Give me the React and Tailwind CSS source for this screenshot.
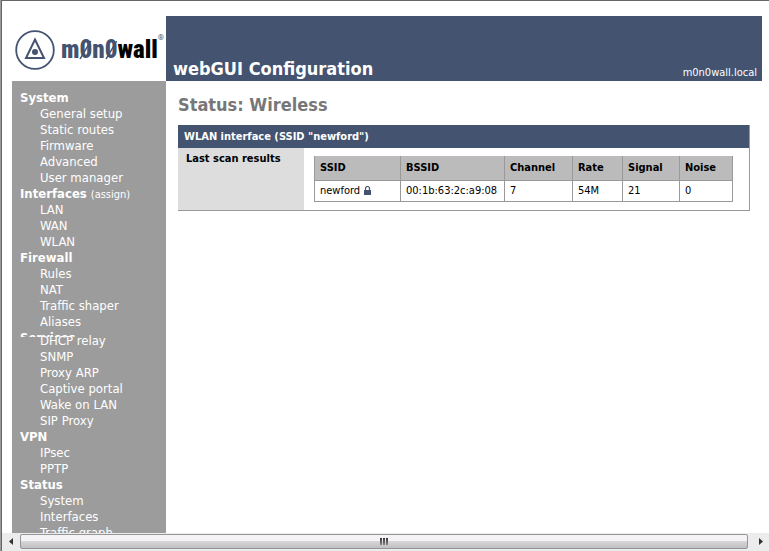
import React from "react";

const menu = [
  { title: "System", items: ["General setup", "Static routes", "Firmware", "Advanced", "User manager"] },
  { title: "Interfaces", extra: "(assign)", items: ["LAN", "WAN", "WLAN"] },
  { title: "Firewall", items: ["Rules", "NAT", "Traffic shaper", "Aliases"] },
  {
    title: "Services",
    cut: true,
    items: ["DHCP relay", "SNMP", "Proxy ARP", "Captive portal", "Wake on LAN", "SIP Proxy"],
  },
  { title: "VPN", items: ["IPsec", "PPTP"] },
  { title: "Status", items: ["System", "Interfaces", "Traffic graph"] },
];

const columns = [
  { name: "SSID", width: "w-[86px]" },
  { name: "BSSID", width: "w-[104px]" },
  { name: "Channel", width: "w-[68px]" },
  { name: "Rate", width: "w-[50px]" },
  { name: "Signal", width: "w-[57px]" },
  { name: "Noise", width: "w-[53px]" },
];

const networks = [["newford", "00:1b:63:2c:a9:08", "7", "54M", "21", "0"]];

function SlashedZero() {
  return (
    <span className="relative inline-block">
      0
      <svg
        className="absolute inset-x-0 top-2 h-5 w-full"
        viewBox="0 0 12 20"
        preserveAspectRatio="none"
        aria-hidden="true"
      >
        <path d="M1 19 L11 1" stroke="#435370" strokeWidth="1.5" />
      </svg>
    </span>
  );
}

function Logo() {
  return (
    <div className="flex h-full items-center pl-[3px] pt-[3px]">
      <svg className="shrink-0" width="40" height="40" viewBox="0 0 40 40" fill="none" stroke="#435370" aria-hidden="true">
        <circle cx="20" cy="20" r="18.8" strokeWidth="1.8" />
        <path d="M20 9.5 L29 28 H11 Z" strokeWidth="2" />
        <circle cx="20" cy="22" r="3" fill="#435370" stroke="none" />
      </svg>
      <div className="ml-1.5 flex items-start font-['Roboto_Condensed','Roboto',sans-serif] text-[25px] font-black leading-9 text-black">
        <span className="text-[#435370]">
          m<SlashedZero />n<SlashedZero />
        </span>
        <span>wall</span>
        <span className="text-[8px] font-normal leading-3 text-[#555]">®</span>
      </div>
    </div>
  );
}

function Sidebar() {
  return (
    <nav className="w-[154px] shrink-0 bg-[#9c9c9c] pl-2 pt-[9px] text-[13px] leading-4 text-white">
      {menu.map((group) => (
        <div key={group.title}>
          <div className={group.cut ? "h-[7px] overflow-hidden" : "h-4"}>
            <strong>{group.title}</strong>
            {group.extra && (
              <a href="#assign" className="ml-1 text-[11px]">
                {group.extra}
              </a>
            )}
          </div>
          <ul className={group.cut ? "-mt-1 pl-5" : "pl-5"}>
            {group.items.map((item) => (
              <li key={item} className="h-4">
                <a href="#page">{item}</a>
              </li>
            ))}
          </ul>
        </div>
      ))}
    </nav>
  );
}

function Lock() {
  return (
    <svg width="7" height="9" viewBox="0 0 7 9" className="ml-1 inline-block align-[-1px]" role="img" aria-label="encrypted">
      <path d="M1.5 4 V2.5 A2 2 0 0 1 5.5 2.5 V4" fill="none" stroke="#435370" strokeWidth="1.2" />
      <rect y="4" width="7" height="5" fill="#435370" />
    </svg>
  );
}

function ScanTable() {
  return (
    <table className="table-fixed border-collapse text-left text-[11px] leading-[14px]">
      <thead>
        <tr className="h-6 bg-[#bbb]">
          {columns.map((c) => (
            <th key={c.name} className={`${c.width} border border-t-0 border-[#999] px-[5px] pt-px font-bold`}>
              {c.name}
            </th>
          ))}
        </tr>
      </thead>
      <tbody>
        {networks.map((row) => (
          <tr key={row[1]} className="h-[21px]">
            {row.map((cell, i) => (
              <td key={i} className="whitespace-nowrap border border-[#999] px-[5px] pt-px">
                {cell}
                {i === 0 && <Lock />}
              </td>
            ))}
          </tr>
        ))}
      </tbody>
    </table>
  );
}

function ScrollBar() {
  return (
    <div className="flex h-[18px] shrink-0 items-center bg-[#ececec] pb-px">
      <button aria-label="Scroll left" className="flex w-[18px] justify-center">
        <svg width="4" height="7" viewBox="0 0 4 7">
          <path d="M4 0 V7 L0 3.5 Z" fill="#333" />
        </svg>
      </button>
      <div className="flex h-[15px] flex-1 items-center justify-center gap-px rounded-xs border border-[#969696] bg-linear-to-b from-[#f5f3f5] from-45% via-[#d6d5d8] via-50% to-[#c0c0c3]">
        {[0, 1, 2].map((n) => (
          <span key={n} className="h-[7px] w-0.5 bg-linear-to-b from-[#333] to-[#888]" />
        ))}
      </div>
      <button aria-label="Scroll right" className="flex w-[21px] justify-center pl-1">
        <svg width="4" height="7" viewBox="0 0 4 7">
          <path d="M0 0 V7 L4 3.5 Z" fill="#333" />
        </svg>
      </button>
    </div>
  );
}

export default function App() {
  return (
    <div className="flex h-screen border-l border-[#9b9b9b] bg-white font-['DejaVu_Sans_Condensed','DejaVu_Sans',sans-serif] text-black">
      <div className="flex min-w-0 flex-1 flex-col border-l border-t border-[#666]">
        <div className="flex min-h-0 flex-1 flex-col overflow-hidden pl-2.5 pr-[7px] pt-[15px]">
          <header className="flex h-[65px] shrink-0">
            <div className="w-[154px] shrink-0">
              <Logo />
            </div>
            <div className="flex flex-1 items-end justify-between bg-[#435370] pl-[7px] pr-[5px] text-white">
              <span className="text-lg font-bold leading-6">webGUI Configuration</span>
              <span className="text-[11px] leading-4">m0n0wall.local</span>
            </div>
          </header>
          <div className="flex min-h-0 flex-1">
            <Sidebar />
            <main className="min-w-0 flex-1 pl-3 pr-3 pt-3">
              <h1 className="text-lg font-bold leading-6 text-[#777]">Status: Wireless</h1>
              <section className="mt-2 border-b border-r border-[#999]">
                <h2 className="h-[23px] bg-[#435370] pl-1.5 text-[11px] font-bold leading-6 text-white">
                  WLAN interface (SSID "newford")
                </h2>
                <div className="flex">
                  <div className="w-[126px] shrink-0 bg-[#ddd] pl-2 pt-1 text-[11px] font-bold leading-[14px]">
                    Last scan results
                  </div>
                  <div className="pb-2 pl-2.5 pt-2">
                    <ScanTable />
                  </div>
                </div>
              </section>
            </main>
          </div>
        </div>
        <ScrollBar />
      </div>
    </div>
  );
}
